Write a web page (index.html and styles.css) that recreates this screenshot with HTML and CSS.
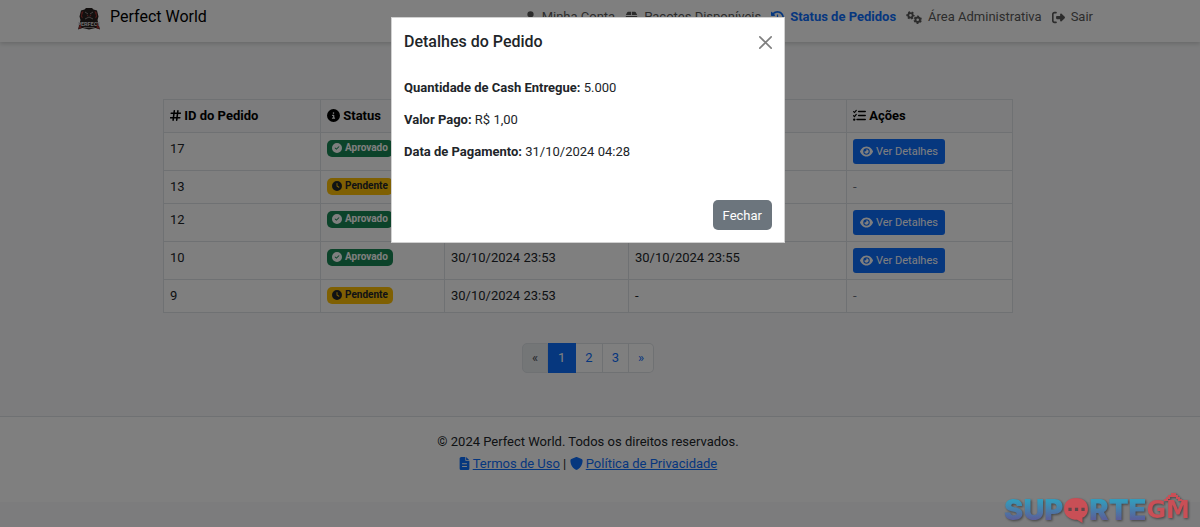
FILE: index.html
```html
<!DOCTYPE html>
<html lang="pt-BR">

<head>
    <meta charset="UTF-8">
    <meta name="viewport" content="width=device-width, initial-scale=1.0">
    <title>Perfect World - Status de Pedidos</title>
    <link rel="stylesheet" href="styles.css">
</head>

<body>
    <!-- Icons -->
    <svg class="sprite" aria-hidden="true">
        <symbol id="user" viewBox="0 0 448 512"><path d="M224 256A128 128 0 1 0 224 0a128 128 0 1 0 0 256zm-45.7 48C79.8 304 0 383.8 0 482.3C0 498.7 13.3 512 29.7 512H418.3c16.4 0 29.7-13.3 29.7-29.7C448 383.8 368.2 304 269.7 304H178.3z"/></symbol>
        <symbol id="box" viewBox="0 0 448 512"><path d="M50.7 58.5L0 160H208V32H93.7C75.5 32 58.9 42.3 50.7 58.5zM240 160H448L397.3 58.5C389.1 42.3 372.5 32 354.3 32H240V160zm208 32H0V416c0 35.3 28.7 64 64 64H384c35.3 0 64-28.7 64-64V192z"/></symbol>
        <symbol id="history" viewBox="0 0 512 512"><path d="M75 75L41 41C25.9 25.9 0 36.6 0 57.9V168c0 13.3 10.7 24 24 24H134.1c21.4 0 32.1-25.9 17-41l-30.8-30.8C155 85.5 203 64 256 64c106 0 192 86 192 192s-86 192-192 192c-40.8 0-78.6-12.7-109.7-34.4c-14.5-10.1-34.4-6.6-44.6 7.9s-6.6 34.4 7.9 44.6C151.2 495 201.7 512 256 512c141.4 0 256-114.6 256-256S397.4 0 256 0C185.3 0 121.3 28.7 75 75zm181 53c-13.3 0-24 10.7-24 24V256c0 6.4 2.5 12.5 7 17l72 72c9.4 9.4 24.6 9.4 33.9 0s9.4-24.6 0-33.9l-65-65V152c0-13.3-10.7-24-24-24z"/></symbol>
        <symbol id="cogs" viewBox="0 0 640 512">
            <g fill="none" stroke="currentColor">
                <circle cx="180" cy="170" r="90" stroke-width="76"/>
                <circle cx="180" cy="170" r="135" stroke-width="64" stroke-dasharray="76 65.4" stroke-dashoffset="38"/>
                <circle cx="468" cy="346" r="90" stroke-width="76"/>
                <circle cx="468" cy="346" r="135" stroke-width="64" stroke-dasharray="76 65.4" stroke-dashoffset="108"/>
            </g>
        </symbol>
        <symbol id="sign-out" viewBox="0 0 512 512"><path d="M377.9 105.9L500.7 228.7c7.2 7.2 11.3 17.1 11.3 27.3s-4.1 20.1-11.3 27.3L377.9 406.1c-6.4 6.4-15 9.9-24 9.9c-18.7 0-33.9-15.2-33.9-33.9l0-62.1-128 0c-17.7 0-32-14.3-32-32l0-64c0-17.7 14.3-32 32-32l128 0 0-62.1c0-18.7 15.2-33.9 33.9-33.9c9 0 17.6 3.6 24 9.9zM160 96L96 96c-17.7 0-32 14.3-32 32l0 256c0 17.7 14.3 32 32 32l64 0c17.7 0 32 14.3 32 32s-14.3 32-32 32l-64 0c-53 0-96-43-96-96L0 128C0 75 43 32 96 32l64 0c17.7 0 32 14.3 32 32s-14.3 32-32 32z"/></symbol>
        <symbol id="hash" viewBox="0 0 448 512"><path d="M175 64L127 448M321 64L273 448M48 160H432M16 352H400" fill="none" stroke="currentColor" stroke-width="62" stroke-linecap="round"/></symbol>
        <symbol id="info" viewBox="0 0 512 512"><path d="M256 512A256 256 0 1 0 256 0a256 256 0 1 0 0 512zM216 336h24V272H216c-13.3 0-24-10.7-24-24s10.7-24 24-24h48c13.3 0 24 10.7 24 24v88h8c13.3 0 24 10.7 24 24s-10.7 24-24 24H216c-13.3 0-24-10.7-24-24s10.7-24 24-24zm40-208a32 32 0 1 1 0 64 32 32 0 1 1 0-64z"/></symbol>
        <symbol id="tasks" viewBox="0 0 512 512">
            <path d="M24 104L60 138L128 56M24 264L60 298L128 216" fill="none" stroke="currentColor" stroke-width="46" stroke-linecap="round"/>
            <path d="M224 96H480M224 256H480M160 416H480" fill="none" stroke="currentColor" stroke-width="62" stroke-linecap="round"/>
            <circle cx="48" cy="416" r="46"/>
        </symbol>
        <symbol id="check" viewBox="0 0 512 512"><path d="M256 512A256 256 0 1 0 256 0a256 256 0 1 0 0 512zM369 209L241 337c-9.4 9.4-24.6 9.4-33.9 0l-64-64c-9.4-9.4-9.4-24.6 0-33.9s24.6-9.4 33.9 0l47 47L335 175c9.4-9.4 24.6-9.4 33.9 0s9.4 24.6 0 33.9z"/></symbol>
        <symbol id="clock" viewBox="0 0 512 512"><path d="M256 0a256 256 0 1 1 0 512A256 256 0 1 1 256 0zM232 120V256c0 8 4 15.5 10.7 20l96 64c11 7.4 25.9 4.4 33.3-6.7s4.4-25.9-6.7-33.3L280 243.2V120c0-13.3-10.7-24-24-24s-24 10.7-24 24z" fill-rule="evenodd"/></symbol>
        <symbol id="eye" viewBox="0 0 576 512"><path d="M288 32c-80.8 0-145.5 36.8-192.6 80.6C48.6 156 17.3 208 2.5 243.7c-3.3 7.9-3.3 16.7 0 24.6C17.3 304 48.6 356 95.4 399.4C142.5 443.2 207.2 480 288 480s145.5-36.8 192.6-80.6c46.8-43.5 78.1-95.4 93-131.1c3.3-7.9 3.3-16.7 0-24.6c-14.9-35.7-46.2-87.7-93-131.1C433.5 68.8 368.8 32 288 32zM144 256a144 144 0 1 1 288 0 144 144 0 1 1 -288 0zm144-64c0 35.3-28.7 64-64 64c-7.1 0-13.9-1.2-20.3-3.3c-5.5-1.8-11.9 1.6-11.7 7.4c.3 6.9 1.3 13.8 3.2 20.7c13.7 51.2 66.4 81.6 117.6 67.9s81.6-66.4 67.9-117.6c-11.1-41.5-47.8-69.4-88.6-71.1c-5.8-.2-9.2 6.1-7.4 11.7c2.1 6.4 3.3 13.2 3.3 20.3z" fill-rule="evenodd"/></symbol>
        <symbol id="file" viewBox="0 0 384 512"><path d="M64 0C28.7 0 0 28.7 0 64V448c0 35.3 28.7 64 64 64H320c35.3 0 64-28.7 64-64V160H256c-17.7 0-32-14.3-32-32V0H64zM256 0V128H384L256 0zM96 246H288V290H96zM96 350H288V394H96z" fill-rule="evenodd"/></symbol>
        <symbol id="shield" viewBox="0 0 512 512"><path d="M256 0c4.600 0 9.200 1 13.400 2.900L457.700 82.800c22 9.300 38.400 31 38.300 57.200c-.5 99.200-41.300 280.700-213.600 363.200c-16.700 8-36.100 8-52.800 0C57.300 420.700 16.500 239.200 16 140c-.1-26.200 16.300-47.900 38.300-57.200L242.700 2.900C246.800 1 251.400 0 256 0z"/></symbol>
    </svg>

    <header class="navbar">
        <div class="navbar-container">
            <a class="brand" href="#">
                <svg class="brand-logo" viewBox="0 0 44 44" aria-hidden="true">
                    <path d="M6 5L13 3L16 0L28 0L31 3L38 5L41 17L39 24L44 43L35 40L22 43L9 40L0 43L5 24L3 17Z" fill="#26201f"/>
                    <path d="M7 8L11 6L8 15L10 21L6 18ZM37 8L33 6L36 15L34 21L38 18ZM1 42L5 27L7 40ZM43 42L39 27L37 40ZM17 13L21 15L19 17ZM27 13L23 15L25 17Z" fill="#a8332f"/>
                    <path d="M14 8L20 12M30 8L24 12M14 22L22 18L30 22M11 39H33" stroke="#8d8583" stroke-width="2" fill="none"/>
                    <text x="22" y="36" class="brand-logo-text">PERFECT</text>
                </svg>
                Perfect World
            </a>
            <nav class="nav">
                <a class="nav-link" href="#"><svg class="icon narrow"><use href="#user"/></svg>Minha Conta</a>
                <a class="nav-link" href="#"><svg class="icon"><use href="#box"/></svg>Pacotes Disponíveis</a>
                <a class="nav-link active" href="#"><svg class="icon"><use href="#history"/></svg>Status de Pedidos</a>
                <a class="nav-link" href="#"><svg class="icon wide"><use href="#cogs"/></svg>Área Administrativa</a>
                <a class="nav-link" href="#"><svg class="icon"><use href="#sign-out"/></svg>Sair</a>
            </nav>
        </div>
    </header>

    <main class="content">
        <table class="orders">
            <colgroup>
                <col class="col-id">
                <col class="col-status">
                <col class="col-created">
                <col class="col-paid">
                <col class="col-actions">
            </colgroup>
            <thead>
                <tr>
                    <th><svg class="icon narrow"><use href="#hash"/></svg> ID do Pedido</th>
                    <th><svg class="icon"><use href="#info"/></svg> Status</th>
                    <th>Data do Pedido</th>
                    <th>Data de Pagamento</th>
                    <th><svg class="icon"><use href="#tasks"/></svg> Ações</th>
                </tr>
            </thead>
            <tbody>
                <tr>
                    <td>17</td>
                    <td><span class="badge approved"><svg class="icon"><use href="#check"/></svg>Aprovado</span></td>
                    <td>31/10/2024 04:27</td>
                    <td>31/10/2024 04:28</td>
                    <td><button class="btn btn-primary" type="button"><svg class="icon"><use href="#eye"/></svg>Ver Detalhes</button></td>
                </tr>
                <tr>
                    <td>13</td>
                    <td><span class="badge pending"><svg class="icon"><use href="#clock"/></svg>Pendente</span></td>
                    <td>30/10/2024 23:54</td>
                    <td>-</td>
                    <td class="muted">-</td>
                </tr>
                <tr>
                    <td>12</td>
                    <td><span class="badge approved"><svg class="icon"><use href="#check"/></svg>Aprovado</span></td>
                    <td>30/10/2024 23:54</td>
                    <td>30/10/2024 23:55</td>
                    <td><button class="btn btn-primary" type="button"><svg class="icon"><use href="#eye"/></svg>Ver Detalhes</button></td>
                </tr>
                <tr>
                    <td>10</td>
                    <td><span class="badge approved"><svg class="icon"><use href="#check"/></svg>Aprovado</span></td>
                    <td>30/10/2024 23:53</td>
                    <td>30/10/2024 23:55</td>
                    <td><button class="btn btn-primary" type="button"><svg class="icon"><use href="#eye"/></svg>Ver Detalhes</button></td>
                </tr>
                <tr>
                    <td>9</td>
                    <td><span class="badge pending"><svg class="icon"><use href="#clock"/></svg>Pendente</span></td>
                    <td>30/10/2024 23:53</td>
                    <td>-</td>
                    <td class="muted">-</td>
                </tr>
            </tbody>
        </table>

        <nav class="pagination" aria-label="Paginação">
            <span class="page disabled">«</span>
            <a class="page current" href="#">1</a>
            <a class="page" href="#">2</a>
            <a class="page" href="#">3</a>
            <a class="page" href="#">»</a>
        </nav>
    </main>

    <footer class="footer">
        <p>© 2024 Perfect World. Todos os direitos reservados.</p>
        <p>
            <svg class="icon narrow link-icon"><use href="#file"/></svg> <a href="#">Termos de Uso</a> |
            <svg class="icon link-icon"><use href="#shield"/></svg> <a href="#">Política de Privacidade</a>
        </p>
    </footer>

    <!-- Order details -->
    <div class="modal">
        <div class="modal-dialog" role="dialog" aria-labelledby="modalTitle">
            <div class="modal-header">
                <h5 class="modal-title" id="modalTitle">Detalhes do Pedido</h5>
                <button class="btn-close" type="button" aria-label="Fechar">
                    <svg viewBox="0 0 16 16"><path d="M1 1L15 15M15 1L1 15"/></svg>
                </button>
            </div>
            <div class="modal-body">
                <p><strong>Quantidade de Cash Entregue:</strong> 5.000</p>
                <p><strong>Valor Pago:</strong> R$ 1,00</p>
                <p><strong>Data de Pagamento:</strong> 31/10/2024 04:28</p>
            </div>
            <div class="modal-footer">
                <button class="btn btn-secondary" type="button">Fechar</button>
            </div>
        </div>
    </div>

    <div class="watermark">
        <span class="wm-blue">SUP</span>
        <svg class="wm-bubble" viewBox="0 0 24 24" aria-hidden="true">
            <path d="M12 1C5 1 1 5 1 11C1 17 6 21 13 21L18 24L18 19C21 18 23 15 23 11C23 5 19 1 12 1Z" fill="#c94f56"/>
            <path d="M5 10h3v3h-3zM11 10h3v3h-3zM17 10h3v3h-3z" fill="#61464a"/>
        </svg>
        <span class="wm-blue">RTE</span>
        <span class="wm-red">GM
            <svg class="wm-hat" viewBox="0 0 18 8" aria-hidden="true"><path d="M0 6h2v-2h2v-2h3v-2h5v2h2v2h2v2h2v2h-4v-2h-2v-2h-6v2h-2v2h-4z" fill="#c94f56"/></svg>
        </span>
    </div>
</body>

</html>
```
FILE: styles.css
```css
:root {
    --gutter: 24px;
    --blue: #0d6efd;
    --border: #dee2e6;
}

* {
    box-sizing: border-box;
}

body {
    margin: 0;
    background-color: #f8f9fa;
    color: #212529;
    font-family: Roboto, sans-serif;
    font-size: 13px;
    line-height: 20px;
}

p {
    margin: 0;
}

a {
    color: var(--blue);
}

.sprite {
    display: none;
}

.icon {
    width: 13px;
    height: 13px;
    fill: currentColor;
    vertical-align: -2px;
}

.icon.narrow {
    width: 11px;
}

.icon.wide {
    width: 16px;
}

/* Navbar */
.navbar {
    padding: 0 calc(var(--gutter) + 78px) 8px 78px;
    background-color: #fff;
    box-shadow: 0 2px 4px rgba(0, 0, 0, 0.15);
}

.navbar-container {
    display: flex;
    align-items: center;
    justify-content: space-between;
    height: 34px;
}

.brand {
    display: flex;
    align-items: center;
    gap: 10px;
    color: #000;
    font-size: 16px;
    text-decoration: none;
}

.brand-logo {
    width: 22px;
    height: 22px;
    margin-top: 4px;
}

.brand-logo-text {
    fill: #ddd;
    font-size: 11px;
    font-weight: bold;
    text-anchor: middle;
}

.nav {
    display: flex;
}

.nav-link {
    display: flex;
    align-items: center;
    gap: 6px;
    padding: 0 5px;
    color: #595959;
    text-decoration: none;
}

.nav-link.active {
    color: var(--blue);
    font-weight: bold;
}

/* Orders */
.content {
    padding: 57px calc(var(--gutter) + 163px) 43px 163px;
}

.orders {
    width: 100%;
    border-collapse: collapse;
    table-layout: fixed;
    background-color: #fff;
}

.orders th,
.orders td {
    padding: 6px;
    border: 1px solid var(--border);
    text-align: left;
    vertical-align: top;
}

.orders th {
    background-color: #f8f9fa;
    color: #000;
}

.orders .muted {
    color: #6c757d;
}

.col-id {
    width: 157px;
}

.col-status {
    width: 124px;
}

.col-created {
    width: 184px;
}

.col-paid {
    width: 218px;
}

.badge {
    display: inline-flex;
    align-items: center;
    gap: 3px;
    height: 17px;
    padding: 0 5px;
    border-radius: 5px;
    font-size: 10px;
    font-weight: bold;
}

.badge .icon {
    width: 10px;
    height: 10px;
}

.approved {
    background-color: #198754;
    color: #fff;
}

.pending {
    background-color: #ffc107;
    color: #212529;
}

.btn {
    display: flex;
    align-items: center;
    border: 0;
    border-radius: 5px;
    color: #fff;
    font-family: inherit;
    font-size: 13px;
    cursor: pointer;
}

.btn-primary {
    gap: 3px;
    height: 25px;
    padding: 0 7px;
    border-radius: 3px;
    background-color: var(--blue);
    font-size: 11px;
}

.btn-secondary {
    height: 30px;
    padding: 0 10px;
    background-color: #6c757d;
}

.pagination {
    display: flex;
    justify-content: center;
    margin-top: 30px;
}

.page {
    padding: 4px 9px;
    border: 1px solid var(--border);
    border-left-width: 0;
    background-color: #fff;
    text-decoration: none;
}

.page:first-child {
    border-left-width: 1px;
    border-radius: 5px 0 0 5px;
}

.page:last-child {
    border-radius: 0 5px 5px 0;
}

.page.disabled {
    background-color: #e9ecef;
    color: #495057;
}

.page.current {
    padding: 4px 10px;
    border-color: var(--blue);
    background-color: var(--blue);
    color: #fff;
}

/* Footer */
.footer {
    padding: 14px var(--gutter) 27px 0;
    border-top: 1px solid var(--border);
    background-color: #fff;
    line-height: 22px;
    text-align: center;
}

.link-icon {
    color: var(--blue);
}

/* Modal */
.modal {
    position: fixed;
    inset: 0;
    padding-right: var(--gutter);
    background-color: rgba(0, 0, 0, 0.5);
}

.modal-dialog {
    max-width: 394px;
    margin: 17px auto;
    border: 1px solid rgba(0, 0, 0, 0.18);
    background-color: #fff;
}

.modal-header {
    display: flex;
    align-items: center;
    justify-content: space-between;
    padding: 12px;
}

.modal-title {
    margin: 0;
    font-size: 16px;
    font-weight: 500;
    line-height: 24px;
}

.btn-close {
    width: 13px;
    height: 13px;
    padding: 0;
    border: 0;
    background: none;
    cursor: pointer;
}

.btn-close svg {
    display: block;
    fill: none;
    stroke: #7f7f7f;
    stroke-width: 2;
    stroke-linecap: round;
    overflow: visible;
}

.modal-body {
    padding: 12px 12px 14px;
}

.modal-body p {
    margin-bottom: 12px;
}

.modal-footer {
    display: flex;
    justify-content: flex-end;
    padding: 12px;
}

/* Watermark */
.watermark {
    position: fixed;
    right: 10px;
    bottom: 2px;
    display: flex;
    align-items: center;
    font-family: Inter, sans-serif;
    font-size: 29px;
    font-weight: 900;
    line-height: 30px;
    filter: drop-shadow(1px 1px 1px #444);
}

.wm-blue {
    background: linear-gradient(#349abb 20%, #5a6099 80%);
    background-clip: text;
    -webkit-background-clip: text;
    color: transparent;
}

.wm-bubble {
    width: 26px;
    height: 26px;
}

.wm-red {
    position: relative;
    color: #c94f56;
    font-family: "DejaVu Sans", sans-serif;
    font-size: 24px;
    font-weight: bold;
}

.wm-hat {
    position: absolute;
    top: -2px;
    right: 8px;
    width: 18px;
    height: 8px;
}
```
